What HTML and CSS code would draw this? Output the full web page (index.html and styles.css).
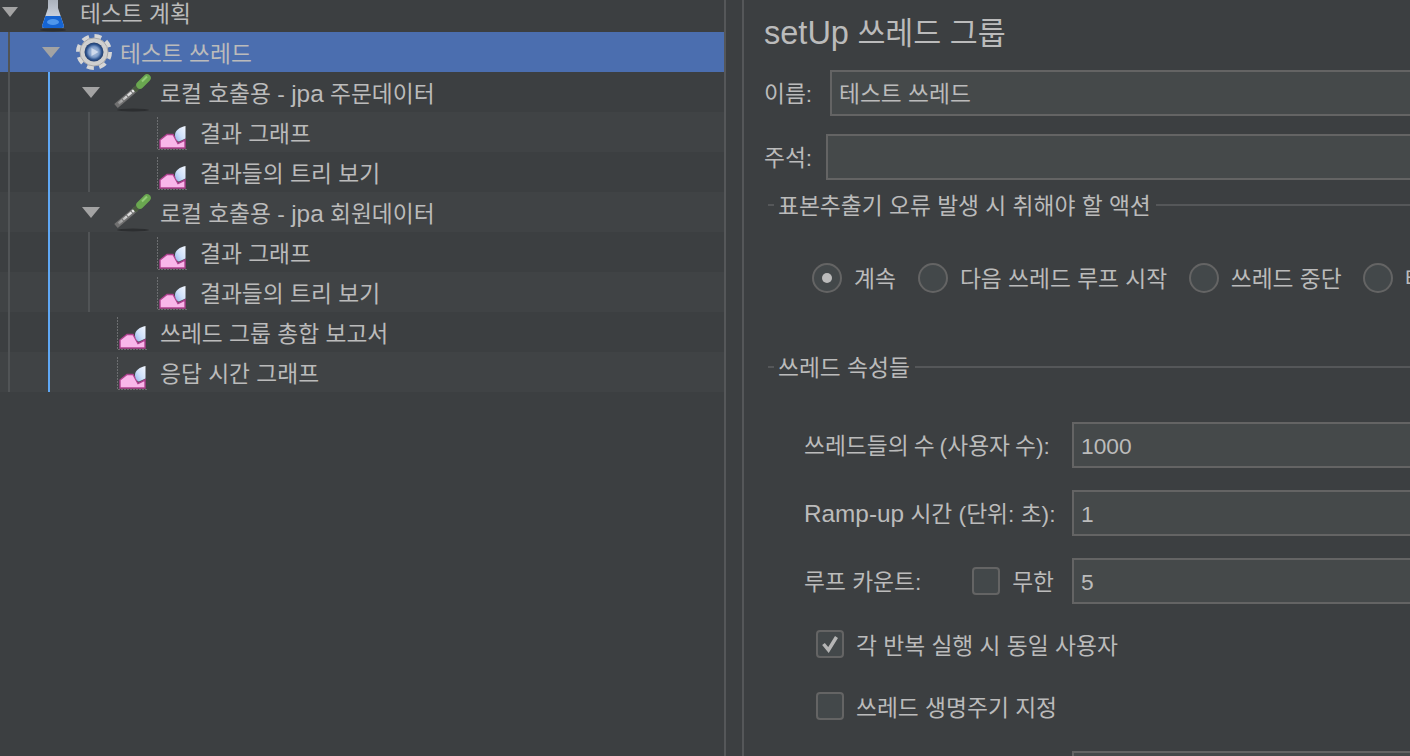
FILE: index.html
```html
<!DOCTYPE html>
<html lang="ko">
<head>
<meta charset="utf-8">
<title>JMeter</title>
<link rel="stylesheet" href="styles.css">
</head>
<body>
<svg class="defs" width="0" height="0" aria-hidden="true">
  <defs>
    <linearGradient id="drop" x1="1" y1="0" x2="0" y2="1"><stop offset="0" stop-color="#f4f8ff"/><stop offset=".55" stop-color="#cfe0fa"/><stop offset="1" stop-color="#8fb0ea"/></linearGradient>
    <linearGradient id="tube" x1="0" y1="1" x2="1" y2="0"><stop offset="0" stop-color="#8a8a8a"/><stop offset=".5" stop-color="#d8d8d8"/><stop offset="1" stop-color="#f0f0f0"/></linearGradient>
    <linearGradient id="flaskg" x1="0" y1="0" x2="0" y2="1"><stop offset="0" stop-color="#a7aeb8"/><stop offset="1" stop-color="#dfe6f2"/></linearGradient>
    <radialGradient id="hub"><stop offset="0" stop-color="#b9cbe4"/><stop offset=".55" stop-color="#7f9cc8"/><stop offset=".8" stop-color="#2f5590"/><stop offset="1" stop-color="#233c68"/></radialGradient>
    <symbol id="i-graph" viewBox="0 0 32 36">
      <path d="M.5 1V33.500H31" fill="none" stroke="#6c6e70" stroke-width="1" stroke-dasharray="2 1"/>
      <path d="M3 32V24L10 18.500H16L21 27.500L28 24V32Z" fill="#f9b6ea" stroke="#b0418f" stroke-width="1.400"/>
      <path d="M28.500 10C23 11 18 14.500 18 19C18 23 20.500 25.500 22 25.500L28.500 22.500Z" fill="url(#drop)"/>
    </symbol>
    <symbol id="i-dropper" viewBox="0 0 40 40">
      <ellipse cx="20" cy="38" rx="16" ry="1.500" fill="#2c2e30"/>
      <path d="M23 17L3 34" stroke="#707070" stroke-width="5.500"/>
      <path d="M23 16.500L5 32" stroke="url(#tube)" stroke-width="2.500" stroke-dasharray="5 1"/>
      <path d="M26 14L21 18.500" stroke="#4a5a40" stroke-width="5.500"/>
      <path d="M34 6L27 13" stroke="#6aa750" stroke-width="7.500" stroke-linecap="round"/>
      <path d="M34 4.500L29 9.500" stroke="#92cb77" stroke-width="2"/>
    </symbol>
    <symbol id="i-flask" viewBox="0 0 30 34">
      <ellipse cx="15" cy="32" rx="13" ry="1.500" fill="#2c2e30"/>
      <path d="M10 0H20V10L26 28Q26 30 24 30H6Q4 30 4 28L10 10Z" fill="url(#flaskg)"/>
      <path d="M7.400 18H22.600L26 28Q26 30 24 30H6Q4 30 4 28Z" fill="#1564d2"/>
      <ellipse cx="15" cy="24" rx="6" ry="3" fill="#4f97ec"/>
    </symbol>
    <symbol id="i-gear" viewBox="0 0 36 38">
      <circle cx="18" cy="19" r="15.500" fill="none" stroke="#d6d6d6" stroke-width="5" stroke-dasharray="6.800 5.370"/>
      <circle cx="18" cy="19" r="14" fill="#cfcfcf" stroke="#a8a8a8" stroke-width="1"/>
      <circle cx="18" cy="19" r="9.500" fill="url(#hub)"/>
      <path d="M15.500 15L22.500 19L15.500 23Z" fill="#cfdaec"/>
    </symbol>
    <symbol id="i-arrow" viewBox="0 0 18 11">
      <path d="M0 0H18L9 11Z" fill="#a3a3a3"/>
    </symbol>
  </defs>
</svg>

<div class="app">
  <nav class="tree">
    <div class="row d0">
      <span class="tw"><svg class="arrow"><use href="#i-arrow"/></svg></span>
      <span class="ic"><svg class="flask"><use href="#i-flask"/></svg></span>
      <span class="lb">테스트 계획</span>
    </div>
    <div class="row d1 sel">
      <span class="tw"><svg class="arrow"><use href="#i-arrow"/></svg></span>
      <span class="ic"><svg class="gear"><use href="#i-gear"/></svg></span>
      <span class="lb">테스트 쓰레드</span>
    </div>
    <div class="row d2">
      <span class="tw"><svg class="arrow"><use href="#i-arrow"/></svg></span>
      <span class="ic"><svg class="dropper"><use href="#i-dropper"/></svg></span>
      <span class="lb">로컬 호출용 - <span class="en">jpa</span> 주문데이터</span>
    </div>
    <div class="row d3 alt">
      <span class="tw"></span>
      <span class="ic"><svg class="graph"><use href="#i-graph"/></svg></span>
      <span class="lb">결과 그래프</span>
    </div>
    <div class="row d3">
      <span class="tw"></span>
      <span class="ic"><svg class="graph"><use href="#i-graph"/></svg></span>
      <span class="lb">결과들의 트리 보기</span>
    </div>
    <div class="row d2 alt">
      <span class="tw"><svg class="arrow"><use href="#i-arrow"/></svg></span>
      <span class="ic"><svg class="dropper"><use href="#i-dropper"/></svg></span>
      <span class="lb">로컬 호출용 - <span class="en">jpa</span> 회원데이터</span>
    </div>
    <div class="row d3">
      <span class="tw"></span>
      <span class="ic"><svg class="graph"><use href="#i-graph"/></svg></span>
      <span class="lb">결과 그래프</span>
    </div>
    <div class="row d3 alt">
      <span class="tw"></span>
      <span class="ic"><svg class="graph"><use href="#i-graph"/></svg></span>
      <span class="lb">결과들의 트리 보기</span>
    </div>
    <div class="row d2">
      <span class="tw"></span>
      <span class="ic"><svg class="graph"><use href="#i-graph"/></svg></span>
      <span class="lb">쓰레드 그룹 총합 보고서</span>
    </div>
    <div class="row d2 alt">
      <span class="tw"></span>
      <span class="ic"><svg class="graph"><use href="#i-graph"/></svg></span>
      <span class="lb">응답 시간 그래프</span>
    </div>
    <i class="guide g-root"></i>
    <i class="guide g-thread"></i>
    <i class="guide g-a"></i>
    <i class="guide g-b"></i>
  </nav>

  <div class="gutter"></div>

  <main class="panel">
    <h1 class="title"><span class="en">setUp</span> 쓰레드 그룹</h1>
    <div class="field f-name">
      <label class="flabel">이름:</label>
      <div class="input">테스트 쓰레드</div>
    </div>
    <div class="field f-note">
      <label class="flabel">주석:</label>
      <div class="input"></div>
    </div>

    <div class="legend l-first"><span>표본추출기 오류 발생 시 취해야 할 액션</span></div>
    <div class="radios">
      <span class="radio on"></span><span class="rlabel r1">계속</span>
      <span class="radio"></span><span class="rlabel r2">다음 쓰레드 루프 시작</span>
      <span class="radio"></span><span class="rlabel r3">쓰레드 중단</span>
      <span class="radio"></span><span class="rlabel">테스트 중단</span>
    </div>

    <div class="legend l-second"><span>쓰레드 속성들</span></div>
    <div class="props">
      <div class="prop">
        <div class="plabel tight">쓰레드들의 수 (사용자 수):</div>
        <div class="input">1000</div>
      </div>
      <div class="prop">
        <div class="plabel"><span class="en">Ramp-up</span> 시간 (단위: 초):</div>
        <div class="input">1</div>
      </div>
      <div class="prop">
        <div class="plabel split">
          <span>루프 카운트:</span>
          <span class="inf"><span class="check"></span><span>무한</span></span>
        </div>
        <div class="input">5</div>
      </div>
    </div>
    <div class="cline c-first">
      <span class="check"><svg class="tick" viewBox="0 0 20 20"><path d="M3.500 10L8.500 16L16.500 3" fill="none" stroke="#b5b5b5" stroke-width="3.500"/></svg></span>
      <span class="ctext">각 반복 실행 시 동일 사용자</span>
    </div>
    <div class="cline c-second">
      <span class="check"></span>
      <span class="ctext">쓰레드 생명주기 지정</span>
    </div>
    <div class="bottom-input"><div class="input"></div></div>
  </main>
</div>
</body>
</html>
```

FILE: styles.css
```css
* { box-sizing: border-box; }
html, body { margin: 0; height: 100%; overflow: hidden; }
body {
  background: #3c3f41;
  color: #bbbbbb;
  font-family: "Liberation Sans", "Noto Sans CJK KR", sans-serif;
  font-size: 22.75px;
  line-height: 40px;
}
.defs { position: absolute; }
.app { display: flex; height: 756px; overflow: hidden; }
.en { font-size: 1.07em; line-height: 1; }

/* tree */
.tree {
  position: relative;
  width: 724px;
  flex: none;
  margin-top: -8px;
}
.row {
  display: flex;
  align-items: center;
  height: 40px;
  white-space: nowrap;
}
.row.alt { background: #404345; }
.row.sel { background: #4b6eaf; }
.d0 { padding-left: 0; }
.d1 { padding-left: 40px; }
.d2 { padding-left: 80px; }
.d3 { padding-left: 120px; }
.tw { width: 38px; flex: none; display: flex; padding-left: 2px; }
.ic { width: 42px; flex: none; display: flex; align-items: center; height: 40px; }
.arrow { width: 18px; height: 11px; }
.d0 .arrow { width: 16px; height: 10px; }
.flask { width: 30px; height: 34px; margin-top: 6px; }
.gear { width: 36px; height: 38px; margin-left: -2px; }
.dropper { width: 40px; height: 40px; margin-left: -5px; }
.graph { width: 32px; height: 36px; margin: 4px 0 0 -1px; }
.lb, .ctext { padding-top: 3px; }
.flabel, .plabel, .rlabel, .legend span, .inf > span:last-child { padding-top: 1px; }
.plabel.split { padding-top: 0; }
.plabel.split > span:first-child { padding-top: 1px; }
.plabel.tight { word-spacing: -1.300px; }

.guide { position: absolute; width: 2px; display: block; }
.g-root { left: 8px; top: 40px; height: 360px; background: #515456; }
.g-thread { left: 48px; top: 80px; height: 320px; background: #5fa8f5; }
.g-a { left: 88px; top: 120px; height: 80px; background: #515456; }
.g-b { left: 88px; top: 240px; height: 80px; background: #515456; }

.gutter {
  width: 20px;
  flex: none;
  border-left: 2px solid #555759;
  border-right: 2px solid #555759;
}

/* right panel */
.panel { flex: 1; min-width: 0; padding-left: 20px; overflow: hidden; }
.title {
  margin: 11px 0 0;
  height: 44px;
  font-size: 30.400px;
  font-weight: 400;
  line-height: 44px;
  color: #bbbbbb;
}
.field { display: flex; align-items: center; height: 46px; }
.f-name { margin-top: 15px; }
.f-note { margin-top: 18px; }
.flabel { flex: none; }
.f-name .flabel { width: 66px; }
.f-note .flabel { width: 62px; }
.input {
  flex: 1;
  height: 46px;
  min-width: 700px;
  border: 2px solid #646464;
  background: #45494a;
  padding: 1px 0 0 7px;
  line-height: 42px;
  color: #bbbbbb;
}
.legend {
  display: flex;
  align-items: center;
  height: 40px;
  padding-left: 4px;
}
.legend::before { content: ""; width: 6px; height: 2px; background: #555759; margin-right: 4px; flex: none; }
.legend::after { content: ""; flex: 1; height: 2px; background: #555759; margin-left: 5px; }
.l-first { margin-top: 5px; }
.l-second { margin-top: 49px; }
.radios {
  display: flex;
  align-items: center;
  height: 40px;
  margin-top: 33px;
  padding-left: 48px;
  white-space: nowrap;
}
.radio {
  flex: none;
  width: 30px;
  height: 30px;
  border-radius: 50%;
  border: 2px solid #646464;
  background: #43484a;
  display: flex;
  align-items: center;
  justify-content: center;
}
.radio.on::after { content: ""; width: 10px; height: 10px; border-radius: 50%; background: #bbbbbb; }
.rlabel { flex: none; margin-left: 12px; }
.r1 { margin-right: 22px; }
.r2 { margin-right: 21.500px; }
.r3 { margin-right: 21px; }

.props { margin-top: 35px; padding-left: 40px; display: flex; flex-direction: column; gap: 22px; }
.prop { display: flex; align-items: center; height: 46px; }
.plabel { width: 268px; flex: none; white-space: nowrap; }
.plabel.split { display: flex; justify-content: space-between; align-items: center; padding-right: 18px; }
.inf { display: flex; align-items: center; gap: 12px; }
.check {
  flex: none;
  width: 28px;
  height: 28px;
  border: 2px solid #646464;
  border-radius: 4px;
  background: #43484a;
  display: flex;
  align-items: center;
  justify-content: center;
}
.tick { width: 20px; height: 20px; }
.cline { display: flex; align-items: center; gap: 12px; height: 40px; padding-left: 52px; white-space: nowrap; }
.c-first { margin-top: 20px; }
.c-second { margin-top: 22px; }
.bottom-input { margin-top: 25px; padding-left: 308px; }
```
